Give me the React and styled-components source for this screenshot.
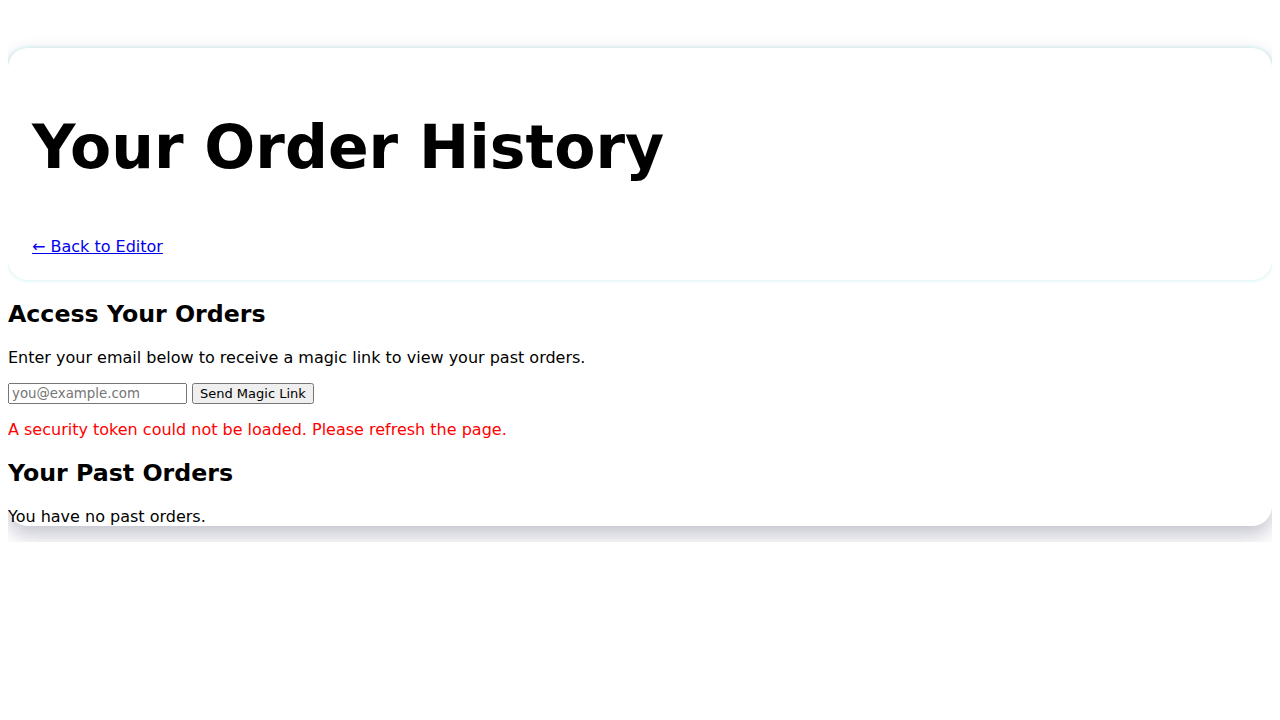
import React from "react";
import styled, { createGlobalStyle } from "styled-components";

const GlobalStyle = createGlobalStyle`
  body {
    margin: 8px;
    font-family: "DejaVu Sans", sans-serif;
    color: #000;
    background: #fff;
  }
`;

const OrdersPage = () => {
  return (
    <>
      <GlobalStyle />
      <Shell>
        <Header>
          <Title>Your Order History</Title>
          <BackLink href="#">← Back to Editor</BackLink>
        </Header>
        <Section>
          <SectionTitle>Access Your Orders</SectionTitle>
          <Text>Enter your email below to receive a magic link to view your past orders.</Text>
          <Form onSubmit={(e) => e.preventDefault()}>
            <EmailInput type="email" placeholder="you@example.com" />
            <SendButton type="submit">Send Magic Link</SendButton>
          </Form>
          <Text error>A security token could not be loaded. Please refresh the page.</Text>
        </Section>
        <Section>
          <SectionTitle>Your Past Orders</SectionTitle>
          <Text>You have no past orders.</Text>
        </Section>
      </Shell>
    </>
  );
};

const Shell = styled.main`
  margin-top: 40px;
  border-radius: 20px;
  box-shadow: 0 9px 20px rgba(40, 40, 80, 0.28);
  background: #fff;
`;

const Header = styled.header`
  padding: 1px 24px 8px;
  border-radius: 20px;
  box-shadow: 0 0 4px rgba(80, 200, 200, 0.35);
  background: #fff;
`;

const Title = styled.h1`
  font-size: 60px;
  margin: 63px 0 55px;
`;

const BackLink = styled.a`
  display: block;
  margin: 16px 0;
  color: #0000ee;
  font-size: 16px;
`;

const Section = styled.section``;

const SectionTitle = styled.h2`
  font-size: 23.7px;
  margin: 20px 0;
`;

const Text = styled.p`
  margin: 16px 0;
  color: ${({ error }) => (error ? "#ff0000" : "#000")};
`;

const Form = styled.form`
  display: flex;
  gap: 5px;
  align-items: center;
`;

const EmailInput = styled.input`
  font-family: "DejaVu Sans", sans-serif;
  font-size: 13.33px;
  width: 179px;
  box-sizing: border-box;
`;

const SendButton = styled.button`
  font-family: "DejaVu Sans", sans-serif;
  font-size: 13px;
`;

export default OrdersPage;
